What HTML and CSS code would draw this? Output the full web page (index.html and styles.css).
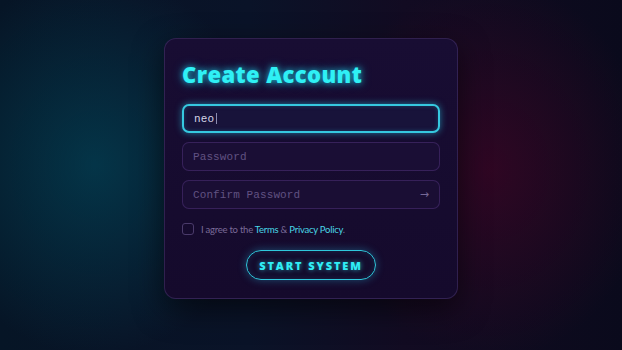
FILE: index.html
```html
<!DOCTYPE html>
<html lang="en">
<head>
    <meta charset="UTF-8" />
    <title>Create Account</title>
    <meta name="viewport" content="width=device-width, initial-scale=1" />
    <link rel="stylesheet" href="styles.css">
</head>
<body>
    <!-- Signup card -->
    <form class="card" onsubmit="return false">
        <h1 class="title">Create Account</h1>
        <div class="field active">
            <span class="value">neo</span><span class="caret"></span>
        </div>
        <div class="field">
            <span class="placeholder">Password</span>
        </div>
        <div class="field">
            <span class="placeholder">Confirm Password</span>
            <span class="arrow">&rarr;</span>
        </div>
        <label class="agree">
            <span class="box"></span>
            <span>I agree to the <a href="#">Terms</a> &amp; <a href="#">Privacy Policy</a>.</span>
        </label>
        <div class="actions">
            <button class="start-btn">START SYSTEM</button>
        </div>
    </form>
</body>
</html>
```

FILE: styles.css
```css
html, body {
    height: 100%;
    margin: 0;
    padding: 0;
    overflow: hidden;
}
body {
    font-family: 'Lato', 'Open Sans', sans-serif;
    background:
        radial-gradient(ellipse 170px 190px at 95px 165px, rgba(0, 85, 105, 0.5), rgba(0, 60, 80, 0) 100%),
        radial-gradient(ellipse 160px 190px at 490px 170px, rgba(95, 0, 40, 0.4), rgba(80, 0, 30, 0) 100%),
        linear-gradient(90deg, #061526 0%, #0a1328 40%, #120b22 65%, #0a0a1c 100%);
    display: flex;
    justify-content: center;
    align-items: flex-start;
}
/* Card */
.card {
    margin-top: 38px;
    width: 258px;
    padding: 20px 17px 18px;
    border-radius: 12px;
    background: linear-gradient(180deg, #180d33 0%, #150a2c 100%);
    border: 1px solid rgba(120, 90, 170, 0.28);
    box-shadow: 0 10px 30px rgba(0,0,0,0.55);
    display: flex;
    flex-direction: column;
}
.title {
    margin: 0 0 15px;
    font-family: 'Open Sans', sans-serif;
    font-weight: 800;
    font-size: 22px;
    line-height: 30px;
    letter-spacing: 0.4px;
    color: #2ff0f5;
    text-shadow: 0 0 6px rgba(30, 230, 245, 0.75), 0 0 12px rgba(30, 200, 240, 0.4);
}
.field {
    height: 27px;
    margin-bottom: 9px;
    padding: 0 10px;
    border: 1px solid rgba(110, 70, 160, 0.35);
    border-radius: 7px;
    background: rgba(30, 18, 60, 0.45);
    display: flex;
    align-items: center;
    font-family: 'Liberation Mono', monospace;
    font-size: 11px;
    letter-spacing: 0.1px;
}
.field.active {
    height: 25px;
    border: 2px solid #36c9e0;
    background: #18133a;
    box-shadow: 0 0 7px rgba(40, 210, 240, 0.55), inset 0 0 4px rgba(40, 210, 240, 0.25);
}
.value {
    color: #d4d4e6;
}
.caret {
    width: 1px;
    height: 11px;
    margin-left: 2px;
    background: #8c8cb0;
}
.placeholder {
    color: #615282;
    flex: 1;
}
.arrow {
    color: #766896;
    font-family: 'DejaVu Sans', sans-serif;
    font-size: 11px;
}
/* Agreement row */
.agree {
    margin-top: 5px;
    display: flex;
    align-items: center;
    gap: 7px;
    font-size: 9.5px;
    letter-spacing: -0.25px;
    color: #7a6a98;
}
.box {
    width: 10px;
    height: 10px;
    border: 1px solid #4a3a6a;
    border-radius: 3px;
}
.agree a {
    color: #49d6e6;
    text-decoration: none;
}
/* Submit */
.actions {
    margin-top: 15px;
    display: flex;
    justify-content: center;
}
.start-btn {
    width: 130px;
    height: 30px;
    border: 1.5px solid #2fc8dc;
    border-radius: 16px;
    background: rgba(20, 14, 45, 0.6);
    color: #30eef5;
    font-family: 'Open Sans', sans-serif;
    font-weight: 800;
    font-size: 11px;
    letter-spacing: 1.9px;
    text-shadow: 0 0 5px rgba(40, 230, 245, 0.7);
    box-shadow: 0 0 8px rgba(40, 200, 240, 0.35), inset 0 0 6px rgba(40, 200, 240, 0.15);
    cursor: pointer;
}
```
